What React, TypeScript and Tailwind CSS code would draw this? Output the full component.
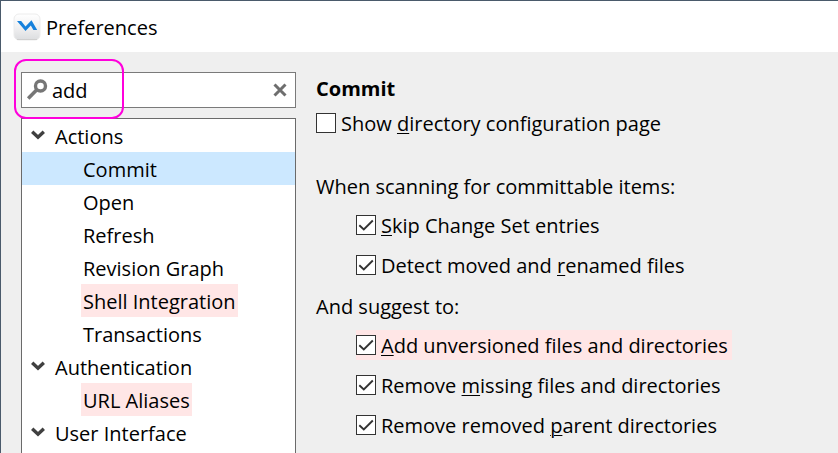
import { useState, type ReactNode } from "react";

type TreeItem = { label: string; match?: boolean };
type TreeGroup = { label: string; items: TreeItem[] };

const groups: TreeGroup[] = [
  {
    label: "Actions",
    items: [
      { label: "Commit" },
      { label: "Open" },
      { label: "Refresh" },
      { label: "Revision Graph" },
      { label: "Shell Integration", match: true },
      { label: "Transactions" },
    ],
  },
  { label: "Authentication", items: [{ label: "URL Aliases", match: true }] },
  { label: "User Interface", items: [] },
];

function AppLogo() {
  return (
    <svg width="28" height="28" viewBox="0 0 28 28" className="shrink-0" aria-hidden="true">
      <defs>
        <linearGradient id="tile" x1="0" y1="0" x2="0" y2="1">
          <stop offset="0" stopColor="#ffffff" />
          <stop offset="0.5" stopColor="#f1f1f2" />
          <stop offset="1" stopColor="#dcdddf" />
        </linearGradient>
      </defs>
      <rect x="1" y="1" width="26" height="26" rx="5" fill="url(#tile)" stroke="#ececec" />
      <path d="M4 26.500h20" stroke="#cfcfcf" />
      <path d="M4 8h4.200l4.300 5.500 6-6.300 5.700 9.800h-3.800l-2.600-4.500-5.300 5.500z" fill="#1681dc" />
    </svg>
  );
}

function SearchIcon() {
  return (
    <svg width="22" height="22" viewBox="0 0 22 22" fill="none" stroke="#767676" className="shrink-0" aria-hidden="true">
      <circle cx="14.500" cy="7" r="5" strokeWidth="3.400" />
      <path d="M10.800 10.800 2.200 19.400" strokeWidth="3.600" />
    </svg>
  );
}

function Chevron() {
  return (
    <svg width="14" height="10" viewBox="0 0 14 10" fill="none" stroke="#404040" strokeWidth="3.400" className="mb-[2px] shrink-0" aria-hidden="true">
      <path d="M1.200 1.700 7 7.200l5.800-5.500" />
    </svg>
  );
}

function Option({
  id,
  checked = false,
  match = false,
  children,
}: {
  id: string;
  checked?: boolean;
  match?: boolean;
  children: ReactNode;
}) {
  return (
    <div className={`flex h-[30px] w-fit items-center gap-[5px] pr-1 ${match ? "bg-[#ffe6e6]" : ""}`}>
      <span className="grid size-5 shrink-0">
        <input
          id={id}
          type="checkbox"
          defaultChecked={checked}
          className="peer col-start-1 row-start-1 size-5 appearance-none border border-[#333333] bg-white"
        />
        <svg
          viewBox="0 0 20 20"
          className="pointer-events-none invisible col-start-1 row-start-1 size-5 peer-checked:visible"
          fill="none"
          stroke="#333333"
          strokeWidth="1.900"
          aria-hidden="true"
        >
          <path d="M3.300 10.200 7.800 14.400 16.800 5.500" />
        </svg>
      </span>
      <label htmlFor={id} className="pt-[2px] leading-[28px] whitespace-nowrap">
        {children}
      </label>
    </div>
  );
}

function Key({ children }: { children: ReactNode }) {
  return <span className="underline decoration-1 underline-offset-2">{children}</span>;
}

export default function App() {
  const [query, setQuery] = useState("add");
  const [selected, setSelected] = useState("Commit");

  return (
    <div className="flex h-screen flex-col overflow-hidden border-t border-l border-[#4a5a6b] bg-[#efefef] font-['Open_Sans','Noto_Sans',sans-serif] text-[20px] leading-[30px] text-black">
      <header className="flex h-[51px] shrink-0 items-center gap-[5px] bg-white px-3">
        <AppLogo />
        <h1 className="pt-[2px]">Preferences</h1>
      </header>

      <div className="flex min-h-0 grow gap-5 pt-5 pl-5">
        <aside className="flex w-[275px] shrink-0 flex-col gap-[10px]">
          <div className="relative flex h-9 shrink-0 items-center border border-[#7a7a7a] bg-white px-1">
            <SearchIcon />
            <input
              type="text"
              aria-label="Search preferences"
              value={query}
              onChange={(e) => setQuery(e.target.value)}
              className="ml-1 min-w-0 grow bg-transparent pt-[2px] outline-none"
            />
            <button type="button" aria-label="Clear search" onClick={() => setQuery("")} className="px-1">
              <svg width="14" height="14" viewBox="0 0 14 14" stroke="#6e6e6e" strokeWidth="3" aria-hidden="true">
                <path d="M1.500 1.500l11 11M12.500 1.500l-11 11" />
              </svg>
            </button>
            <div className="pointer-events-none absolute -top-[14px] -left-2 h-[60px] w-[110px] rounded-xl border-2 border-[#ff00dc]" />
          </div>

          <nav className="grow overflow-hidden border border-b-0 border-[#6a6a6a] bg-white">
            <ul>
              {groups.map((group) => (
                <li key={group.label}>
                  <button type="button" className="flex h-[33px] w-full items-center gap-[10px] pl-[9px]">
                    <Chevron />
                    <span className="pt-[2px]">{group.label}</span>
                  </button>
                  <ul>
                    {group.items.map((item) => (
                      <li key={item.label}>
                        <button
                          type="button"
                          onClick={() => setSelected(item.label)}
                          className={`flex h-[33px] w-full pl-[59px] leading-[31px] ${selected === item.label ? "bg-[#cce8ff]" : ""}`}
                        >
                          <span className={`px-[2px] pt-[2px] ${item.match ? "bg-[#ffe6e6]" : ""}`}>{item.label}</span>
                        </button>
                      </li>
                    ))}
                  </ul>
                </li>
              ))}
            </ul>
          </nav>
        </aside>

        <main className="min-w-0 grow">
          <h2 className="pt-[2px] pb-1 font-bold">Commit</h2>
          <Option id="show-page">
            Show <Key>d</Key>irectory configuration page
          </Option>

          <fieldset className="mt-[34px]">
            <legend>When scanning for committable items:</legend>
            <div className="mt-2 flex flex-col gap-[10px] pl-10">
              <Option id="skip" checked>
                <Key>S</Key>kip Change Set entries
              </Option>
              <Option id="detect" checked>
                Detect moved and <Key>r</Key>enamed files
              </Option>
            </div>
          </fieldset>

          <fieldset className="mt-3">
            <legend>And suggest to:</legend>
            <div className="mt-2 flex flex-col gap-[10px] pl-10">
              <Option id="add" checked match>
                <Key>A</Key>dd unversioned files and directories
              </Option>
              <Option id="missing" checked>
                Remove <Key>m</Key>issing files and directories
              </Option>
              <Option id="removed" checked>
                Remove removed <Key>p</Key>arent directories
              </Option>
            </div>
          </fieldset>
        </main>
      </div>
    </div>
  );
}
